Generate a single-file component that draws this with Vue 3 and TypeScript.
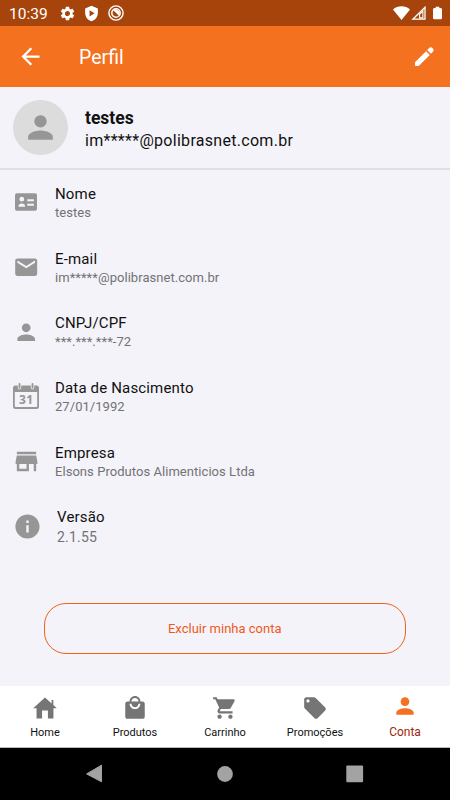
<script setup lang="ts">
interface Row {
  icon: string
  label: string
  value: string
  size: number
}

const rows: Row[] = [
  { icon: 'card', label: 'Nome', value: 'testes', size: 22 },
  { icon: 'mail', label: 'E-mail', value: 'im*****@polibrasnet.com.br', size: 26.4 },
  { icon: 'person', label: 'CNPJ/CPF', value: '***.***.***-72', size: 26.4 },
  { icon: 'calendar', label: 'Data de Nascimento', value: '27/01/1992', size: 28 },
  { icon: 'store', label: 'Empresa', value: 'Elsons Produtos Alimenticios Ltda', size: 29 },
  { icon: 'info', label: 'Versão', value: '2.1.55', size: 29 },
]

const paths: Record<string, string> = {
  mail: 'M20 4H4c-1.1 0-2 .9-2 2v12c0 1.1.9 2 2 2h16c1.1 0 2-.9 2-2V6c0-1.1-.9-2-2-2zm0 4-8 5-8-5V6l8 5 8-5v2z',
  person: 'M12 12c2.21 0 4-1.79 4-4s-1.79-4-4-4-4 1.79-4 4 1.79 4 4 4zm0 2c-2.67 0-8 1.34-8 4v2h16v-2c0-2.66-5.33-4-8-4z',
  store: 'M20 4H4v2h16V4zm1 10v-2l-1-5H4l-1 5v2h1v6h10v-6h4v6h2v-6h1zm-9 4H6v-4h6v4z',
  info: 'M12 2C6.48 2 2 6.48 2 12s4.48 10 10 10 10-4.48 10-10S17.52 2 12 2zm1 15h-2v-6h2v6zm0-8h-2V7h2v2z',
  home: 'M12 2.4 1.1 12.2h3.1v9.6h5.1v-7.4h5.4v7.4h5.1v-9.6h3.1L19.7 9.3V4.6h-1.6v3.3z',
  bag: 'M19 6h-2c0-2.76-2.24-5-5-5S7 3.24 7 6H5c-1.1 0-2 .9-2 2v12c0 1.1.9 2 2 2h14c1.1 0 2-.9 2-2V8c0-1.1-.9-2-2-2zm-7-3.3c1.8 0 3.3 1.5 3.3 3.3H8.7c0-1.8 1.5-3.3 3.3-3.3zm0 10.3c-2.76 0-5-2.24-5-5h1.8c0 1.7 1.5 3.2 3.2 3.2s3.2-1.5 3.2-3.2H17c0 2.76-2.24 5-5 5z',
  cart: 'M7 18c-1.1 0-1.99.9-1.99 2S5.9 22 7 22s2-.9 2-2-.9-2-2-2zM1 2v2h2l3.6 7.59-1.35 2.45c-.16.28-.25.61-.25.96 0 1.1.9 2 2 2h12v-2H7.42c-.14 0-.25-.11-.25-.25l.03-.12.9-1.63h7.45c.75 0 1.41-.41 1.75-1.03l3.58-6.49A1 1 0 0 0 20 4H5.21l-.94-2H1zm16 16c-1.1 0-1.99.9-1.99 2s.89 2 1.99 2 2-.9 2-2-.9-2-2-2z',
  tag: 'm21.41 11.58-9-9C12.05 2.22 11.55 2 11 2H4c-1.1 0-2 .9-2 2v7c0 .55.22 1.05.59 1.42l9 9c.36.36.86.58 1.41.58s1.05-.22 1.41-.59l7-7c.37-.36.59-.86.59-1.41s-.23-1.06-.59-1.42zM5.5 7a1.5 1.5 0 1 1 0-3 1.5 1.5 0 0 1 0 3z',
  gear: 'M19.14 12.94c.04-.3.06-.61.06-.94 0-.32-.02-.64-.07-.94l2.03-1.58c.18-.14.23-.41.12-.61l-1.92-3.32c-.12-.22-.37-.29-.59-.22l-2.39.96c-.5-.38-1.03-.7-1.62-.94l-.36-2.54c-.04-.24-.24-.41-.48-.41h-3.84c-.24 0-.43.17-.47.41l-.36 2.54c-.59.24-1.13.57-1.62.94l-2.39-.96c-.22-.08-.47 0-.59.22L2.74 8.87c-.12.21-.08.47.12.61l2.03 1.58c-.05.3-.09.63-.09.94s.02.64.07.94l-2.03 1.58c-.18.14-.23.41-.12.61l1.92 3.32c.12.22.37.29.59.22l2.39-.96c.5.38 1.03.7 1.62.94l.36 2.54c.05.24.24.41.48.41h3.84c.24 0 .44-.17.47-.41l.36-2.54c.59-.24 1.13-.56 1.62-.94l2.39.96c.22.08.47 0 .59-.22l1.92-3.32c.12-.22.07-.47-.12-.61l-2.01-1.58zM12 15.6A3.61 3.61 0 0 1 8.4 12c0-1.98 1.62-3.6 3.6-3.6s3.6 1.62 3.6 3.6-1.62 3.6-3.6 3.6z',
  shield: 'M12 1 3 5v6c0 5.55 3.84 10.74 9 12 5.16-1.26 9-6.45 9-12V5zM9.3 7.3l7 4.5-7 4.5z',
  back: 'M20 11H7.83l5.59-5.59L12 4l-8 8 8 8 1.41-1.41L7.83 13H20v-2z',
  pencil: 'M3 17.25V20c0 .6.4 1 1 1h2.75L17.81 9.94l-3.75-3.75L3 17.25zM20.7 7.05a2.4 2.4 0 0 0-3.75-3.75l-1.8 1.8 3.75 3.75z',
}

const tabs = [
  { icon: 'home', label: 'Home', active: false },
  { icon: 'bag', label: 'Produtos', active: false },
  { icon: 'cart', label: 'Carrinho', active: false },
  { icon: 'tag', label: 'Promoções', active: false },
  { icon: 'person', label: 'Conta', active: true },
]
</script>

<template>
  <div class="screen">
    <div class="status">
      <span class="clock">10:39</span>
      <svg class="gear" viewBox="0 0 24 24"><path :d="paths.gear" fill-rule="evenodd" /></svg>
      <svg class="shield" viewBox="0 0 24 24"><path :d="paths.shield" fill-rule="evenodd" /></svg>
      <svg class="ring" viewBox="0 0 16 16">
        <circle cx="8" cy="8" r="7.1" fill="none" stroke="#fff" stroke-width="1.4" />
        <circle cx="8" cy="8" r="4.2" fill="none" stroke="#fff" stroke-width="1.5" />
        <path d="M5.4 5.400 8 4l3.600 2.600v4.600z" />
        <path d="m5 7.200 5.200 4" stroke="#a7440b" stroke-width="1" />
      </svg>
      <span class="spacer" />
      <svg class="wifi" viewBox="0 0 17 14"><path d="M8.5 14 0 3.5C4.5-.8 12.5-.8 17 3.5z" /></svg>
      <svg class="signal" viewBox="0 0 15 14">
        <path d="M1.8 13.2 14 1.3v11.9z" fill="none" stroke="#fff" stroke-width="1.3" />
        <path d="M8.6 11.9V8.3L11.9 5v6.9z" fill="none" stroke="#fff" stroke-width="1.1" />
      </svg>
      <svg class="battery" viewBox="0 0 10 14"><path d="M3 0h4v1.5h2l1 1V13l-1 1H1l-1-1V2.5l1-1h2z" /></svg>
    </div>

    <header class="bar">
      <svg class="back" viewBox="0 0 24 24"><path :d="paths.back" /></svg>
      <h1>Perfil</h1>
      <svg class="pencil" viewBox="0 0 24 24"><path :d="paths.pencil" /></svg>
    </header>

    <section class="profile">
      <div class="avatar"><svg viewBox="0 0 24 24"><path :d="paths.person" /></svg></div>
      <div class="who">
        <div class="name">testes</div>
        <div class="mail">im*****@polibrasnet.com.br</div>
      </div>
    </section>

    <main>
      <div v-for="r in rows" :key="r.icon" class="row" :class="`row-${r.icon}`">
        <div class="slot">
          <svg v-if="r.icon === 'calendar'" class="glyph" :width="r.size" :height="r.size" viewBox="0 0 28 28">
            <path
              fill-rule="evenodd"
              d="M3.5 3.5h2.3v2.3a1.7 1.7 0 0 0 3.4 0V3.5h9.6v2.3a1.7 1.7 0 0 0 3.4 0V3.5h2.3A2.5 2.5 0 0 1 27 6v18.5a2.5 2.5 0 0 1-2.5 2.5h-21A2.5 2.5 0 0 1 1 24.5V6a2.5 2.5 0 0 1 2.5-2.5zM2.8 10v14.2c0 .5.3.8.8.8h20.800c.5 0 .8-.3.8-.8V10z"
            />
            <path d="M7.5 1.8v4M20.5 1.8v4" stroke="#969696" stroke-width="1.8" stroke-linecap="round" />
            <text x="14.2" y="22" text-anchor="middle" class="day">31</text>
          </svg>
          <svg v-else-if="r.icon === 'card'" class="glyph" :width="r.size" :height="r.size" viewBox="0 0 24 24">
            <path fill-rule="evenodd" d="M22 2.5H2a2 2 0 0 0-2 2v15a2 2 0 0 0 2 2h20a2 2 0 0 0 2-2v-15a2 2 0 0 0-2-2zM7.4 6.3a2.6 2.6 0 1 1 0 5.2 2.6 2.6 0 0 1 0-5.2zM11 17.3H3.8v-1c0-1.9 1.7-2.8 3.6-2.8s3.6.9 3.6 2.8zm9.6-1.1h-7.2V14h7.2zm0-5h-7.2V9h7.2z" />
          </svg>
          <svg v-else class="glyph" :width="r.size" :height="r.size" viewBox="0 0 24 24"><path :d="paths[r.icon]" /></svg>
        </div>
        <div class="text">
          <div class="label">{{ r.label }}</div>
          <div class="value">{{ r.value }}</div>
        </div>
      </div>
      <button class="delete" type="button">Excluir minha conta</button>
    </main>

    <nav class="tabs">
      <div v-for="t in tabs" :key="t.label" class="tab" :class="{ active: t.active }">
        <svg viewBox="0 0 24 24"><path :d="paths[t.icon]" fill-rule="evenodd" /></svg>
        <span>{{ t.label }}</span>
      </div>
    </nav>

    <div class="system">
      <svg viewBox="0 0 18 20"><path d="M15.500 1.200v16.600L.6 9.900z" stroke="#a3a3a3" stroke-linejoin="round" /></svg>
      <svg viewBox="0 0 18 20"><circle cx="9" cy="10" r="7.900" /></svg>
      <svg viewBox="0 0 18 20"><rect x=".3" y="1.500" width="16.800" height="16.800" rx="1" /></svg>
    </div>
  </div>
</template>

<style>
body {
  margin: 0;
}
</style>

<style scoped>
.screen {
  width: 450px;
  height: 800px;
  display: flex;
  flex-direction: column;
  background: #f4f3f9;
  font-family: Roboto, 'Liberation Sans', sans-serif;
  color: #111;
  overflow: hidden;
}
svg {
  display: block;
  flex: none;
}
.status {
  height: 26px;
  flex: none;
  box-sizing: border-box;
  display: flex;
  align-items: center;
  padding: 0 8px 0 9px;
  background: #a7440b;
  color: #fff;
}
.status svg {
  fill: #fff;
}
.clock {
  width: 51px;
  font-size: 15.5px;
  line-height: 26px;
  padding-top: 1px;
  box-sizing: border-box;
}
.gear {
  width: 17px;
  height: 17px;
  margin-left: -1px;
}
.shield {
  width: 17px;
  height: 17px;
  margin-left: 7px;
}
.ring {
  width: 16px;
  height: 16px;
  margin-left: 7.5px;
}
.spacer {
  flex: 1;
}
.wifi {
  width: 17px;
  height: 14px;
}
.signal {
  width: 15px;
  height: 14px;
  margin-left: 1px;
}
.battery {
  width: 9px;
  height: 14px;
  margin-left: 7px;
}
.bar {
  height: 61px;
  flex: none;
  box-sizing: border-box;
  display: flex;
  align-items: center;
  padding: 0 14px 0 17px;
  background: #f47120;
}
.bar svg {
  fill: #fff;
}
.back {
  width: 27px;
  height: 27px;
}
.bar h1 {
  flex: 1;
  margin: 2px 0 0 35px;
  font-size: 19.5px;
  font-weight: 400;
  color: #fff;
}
.pencil {
  width: 24px;
  height: 24px;
}
.profile {
  height: 83px;
  flex: none;
  box-sizing: border-box;
  display: flex;
  align-items: center;
  padding: 0 13px;
  border-bottom: 2px solid #dfdfe1;
}
.avatar {
  width: 55px;
  height: 55px;
  display: flex;
  align-items: center;
  justify-content: center;
  border-radius: 50%;
  background: #dcdcdc;
}
.avatar svg {
  width: 37px;
  height: 37px;
  fill: #969696;
}
.who {
  margin-left: 17px;
  padding-top: 4px;
}
.name {
  font-size: 17.5px;
  line-height: 23px;
  font-weight: 700;
}
.mail {
  font-size: 16px;
  line-height: 22px;
  letter-spacing: 0.29px;
}
main {
  flex: 1;
  display: flex;
  flex-direction: column;
}
.row {
  height: 64.7px;
  flex: none;
  display: flex;
  box-sizing: border-box;
  padding-left: 11px;
}
.slot {
  width: 30px;
  height: 64.7px;
  display: flex;
  align-items: center;
  justify-content: center;
}
.glyph {
  fill: #969696;
}
.day {
  font: 700 12px 'Open Sans', Roboto, sans-serif;
  letter-spacing: 0.3px;
}
.text {
  margin-left: 14px;
  padding-top: 14px;
  white-space: nowrap;
}
.label {
  font-size: 15px;
  line-height: 20px;
  letter-spacing: 0.16px;
}
.value {
  font-size: 13px;
  line-height: 18px;
  letter-spacing: 0.05px;
  color: #727275;
}
.row-info .slot {
  width: 32px;
  height: 66px;
}
.row-info .value {
  font-size: 14px;
  line-height: 20px;
  letter-spacing: 0.2px;
}
.delete {
  width: 362.5px;
  height: 50.5px;
  margin: 45px 0 0 43.5px;
  border: 1px solid #f0611a;
  border-radius: 22px;
  background: transparent;
  color: #f0591a;
  font: 400 13px Roboto, sans-serif;
  padding: 0;
}
.tabs {
  height: 62px;
  flex: none;
  box-sizing: border-box;
  display: grid;
  grid-template-columns: repeat(5, 90px);
  background: #fff;
  border-bottom: 1px solid #bbb;
}
.tab {
  display: flex;
  flex-direction: column;
  align-items: center;
  padding-top: 9px;
}
.tab svg {
  width: 26px;
  height: 26px;
  fill: #757575;
}
.tab span {
  margin-top: 4px;
  font-size: 11px;
  line-height: 16px;
}
.tab.active {
  padding-top: 7px;
}
.tab.active svg {
  fill: #f47120;
}
.tab.active span {
  margin-top: 5px;
  font-size: 12px;
  color: #a3260c;
}
.system {
  height: 52px;
  flex: none;
  box-sizing: border-box;
  display: flex;
  justify-content: center;
  align-items: center;
  gap: 112px;
  background: #000;
}
.system svg {
  width: 18px;
  height: 20px;
  fill: #a3a3a3;
}
</style>
